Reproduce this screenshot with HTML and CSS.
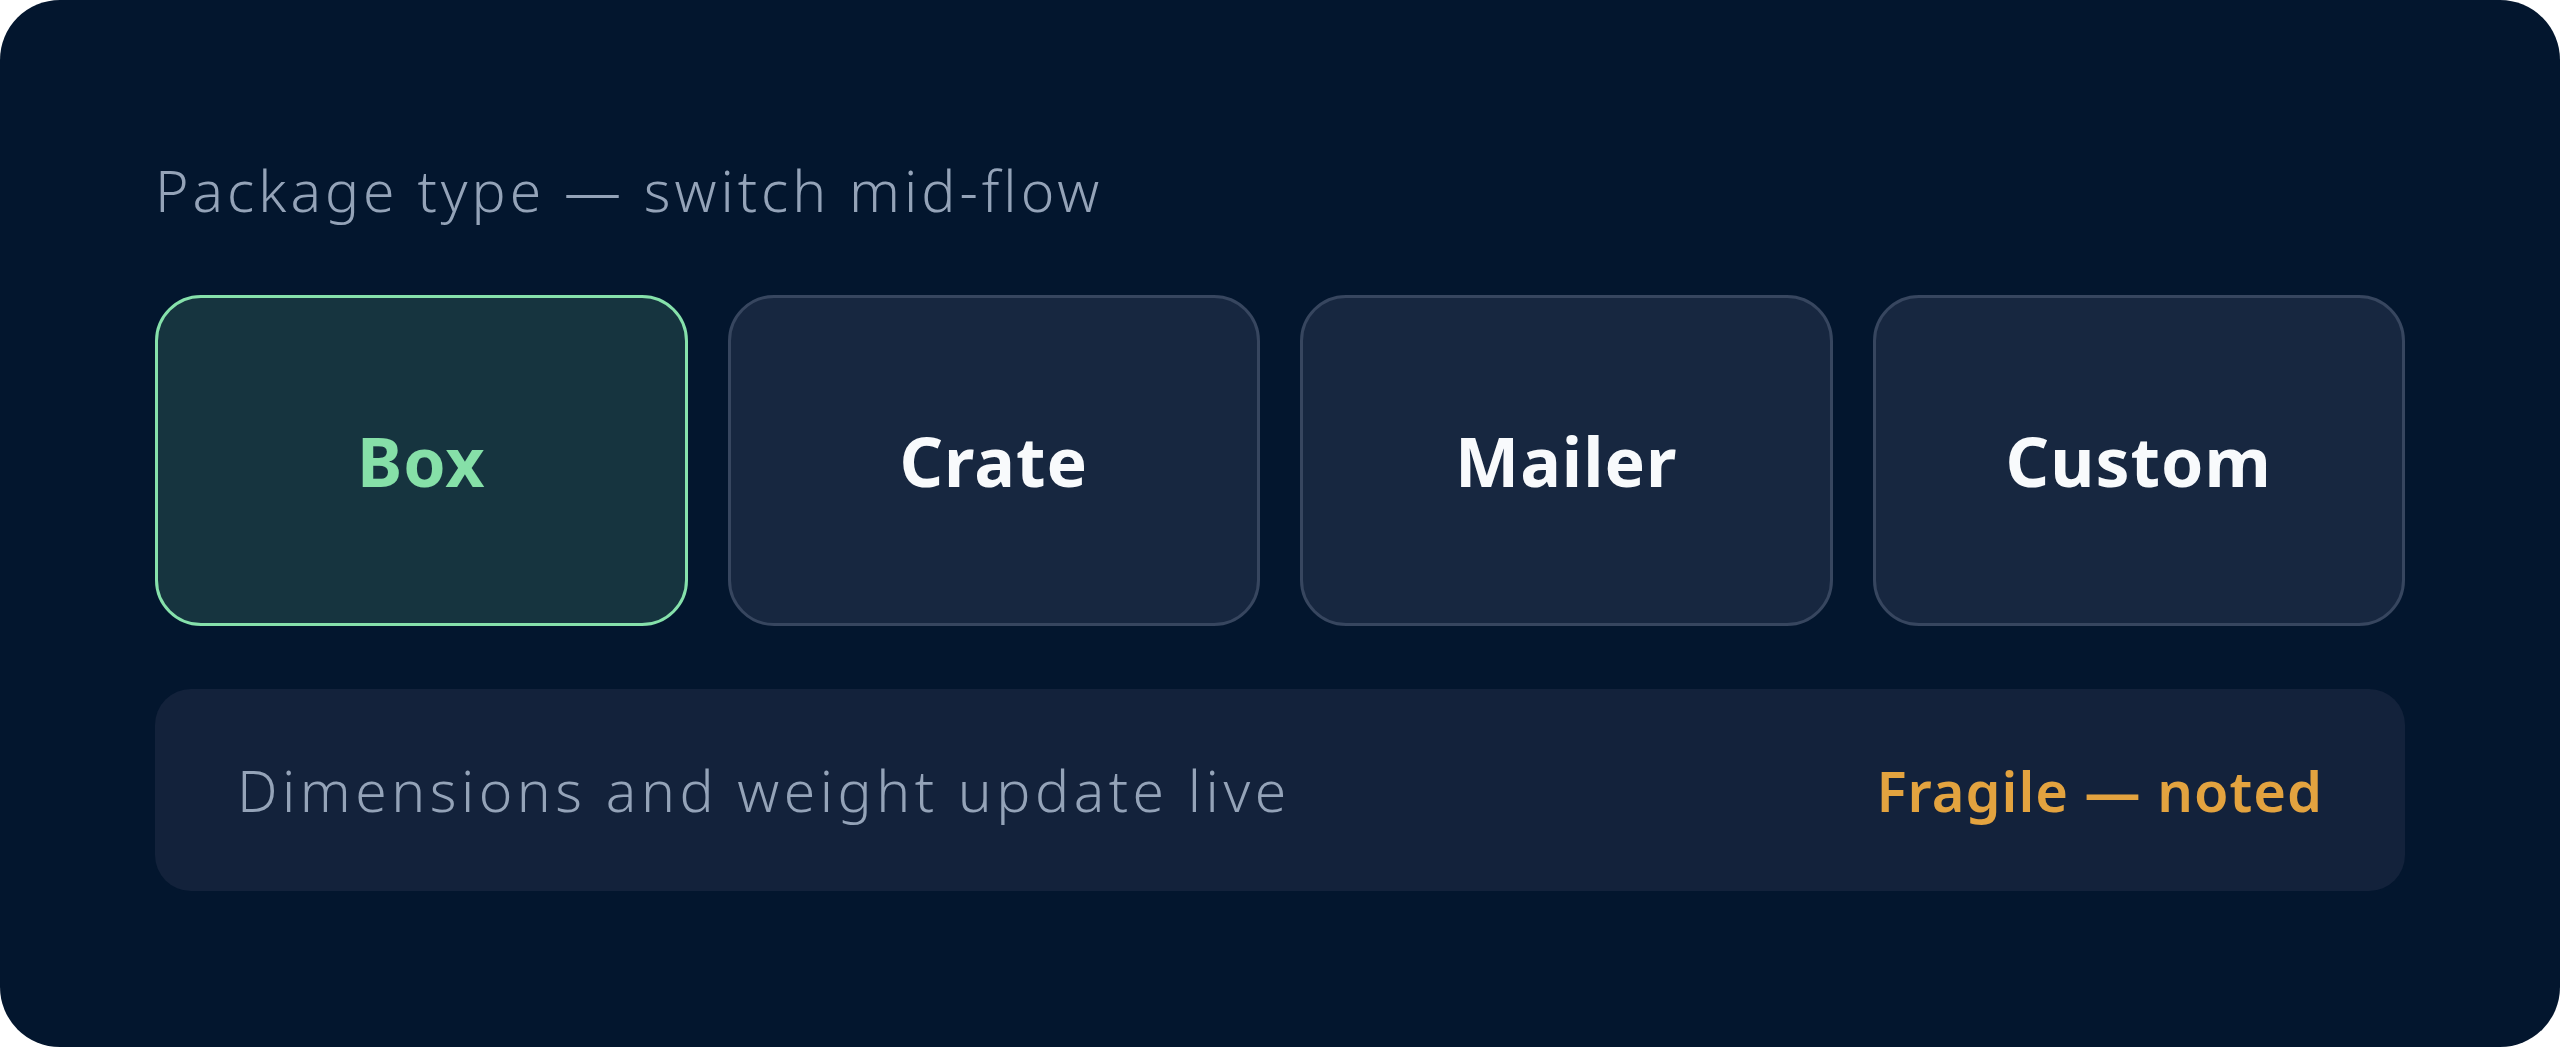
FILE: index.html
```html
<!DOCTYPE html>
<html lang="en">
<head>
    <meta charset="UTF-8">
    <meta name="viewport" content="width=device-width, initial-scale=1.0">
    <title>Package type</title>
    <link rel="stylesheet" href="styles.css">
</head>

<body>
    <div class="panel">
        <div class="panel-label">Package type — switch mid-flow</div>

        <div class="type-list">
            <div class="type-card selected">Box</div>
            <div class="type-card">Crate</div>
            <div class="type-card">Mailer</div>
            <div class="type-card">Custom</div>
        </div>

        <div class="info-bar">
            <div class="info-text">Dimensions and weight update live</div>
            <div class="info-note">Fragile — noted</div>
        </div>
    </div>
</body>
</html>
```

FILE: styles.css
```css
* {
    box-sizing: border-box;
}

html, body {
    margin: 0;
    background-color: #ffffff;
}

.panel {
    display: flex;
    flex-direction: column;
    width: 100vw;
    height: 1047px;
    padding: 151px 155px 0;
    border-radius: 60px;
    background-color: #03162e;
    font-family: "Noto Sans", "Open Sans", sans-serif;
}

.panel-label {
    margin-bottom: 66px;
    color: #94a3b8;
    font-size: 57px;
    font-weight: 300;
    letter-spacing: 4px;
}

.type-list {
    display: grid;
    grid-template-columns: repeat(4, 1fr);
    gap: 40px;
}
.type-list > .type-card {
    display: flex;
    justify-content: center;
    align-items: center;
    height: 331px;
    border: 3px solid #37465f;
    border-radius: 46px;
    background-color: #172740;
    color: #f8fafc;
    font-size: 68px;
    font-weight: 700;
    letter-spacing: 1px;
}
.type-list > .type-card.selected {
    border-color: #86e1ab;
    background-color: #16343f;
    color: #86e0a8;
}

.info-bar {
    display: flex;
    justify-content: space-between;
    align-items: center;
    height: 202px;
    margin-top: 63px;
    padding: 0 82px;
    border-radius: 36px;
    background-color: #13223b;
}
.info-bar > .info-text {
    color: #94a3b8;
    font-size: 57px;
    font-weight: 300;
    letter-spacing: 4.5px;
}
.info-bar > .info-note {
    color: #e3a33f;
    font-size: 56px;
    font-weight: 600;
    letter-spacing: 1px;
}
```
